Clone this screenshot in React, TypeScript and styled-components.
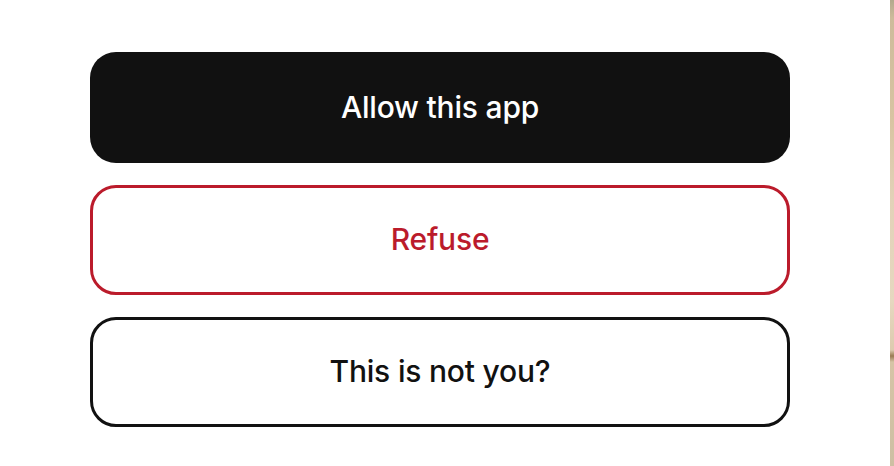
import React from "react";
import styled, { createGlobalStyle } from "styled-components";

const Global = createGlobalStyle`
  html, body { margin: 0; padding: 0; background: #ffffff; }
  body { font-family: Inter, "Noto Sans", sans-serif; }
`;

const Page = styled.div`
  display: flex;
  width: 894px;
  height: 466px;
  overflow: hidden;
`;

const Main = styled.main`
  flex: 1;
  display: flex;
  flex-direction: column;
  gap: 22px;
  padding: 52px 0 0 90px;
  background: #ffffff;
`;

const Edge = styled.div`
  width: 4px;
  background: linear-gradient(
    to bottom,
    #b3a98d 0px,
    #cdbb9b 18px,
    #d8c4a2 120px,
    #e2d2b8 200px,
    #e6d8c0 300px,
    #ddcbaf 350px,
    #9a7a52 356px,
    #d6c4a6 362px,
    #cdbfa3 466px
  );
`;

type Variant = "primary" | "danger" | "outline";

const Button = styled.button<{ $variant: Variant }>`
  box-sizing: border-box;
  width: 700px;
  height: ${(p) => (p.$variant === "primary" ? "111px" : "110px")};
  border-radius: 26px;
  font-family: Inter, "Noto Sans", sans-serif;
  font-size: 30px;
  font-weight: 500;
  letter-spacing: -0.2px;
  display: flex;
  align-items: center;
  justify-content: center;
  cursor: pointer;
  background: ${(p) => (p.$variant === "primary" ? "#111111" : "#ffffff")};
  color: ${(p) =>
    p.$variant === "primary" ? "#ffffff" : p.$variant === "danger" ? "#bb1b2b" : "#111111"};
  border: ${(p) =>
    p.$variant === "primary"
      ? "none"
      : p.$variant === "danger"
      ? "3px solid #bb1b2b"
      : "3px solid #111111"};
  padding: 0 0 2px 0;
`;

export default function App() {
  return (
    <>
      <Global />
      <Page>
        <Main>
          <Button $variant="primary">Allow this app</Button>
          <Button $variant="danger">Refuse</Button>
          <Button $variant="outline">This is not you?</Button>
        </Main>
        <Edge />
      </Page>
    </>
  );
}
